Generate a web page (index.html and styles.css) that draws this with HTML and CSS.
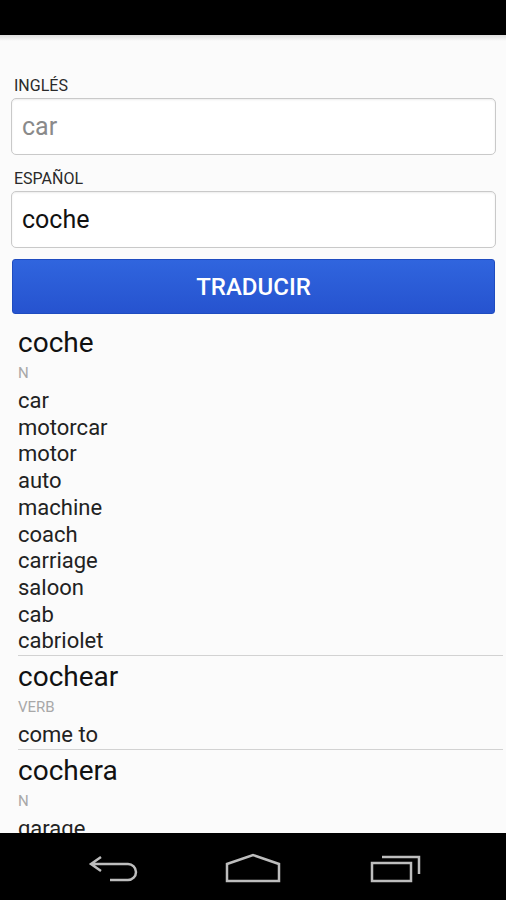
FILE: index.html
```html
<!DOCTYPE html>
<html>
<head>
  <link rel="stylesheet" href="styles.css">
</head>
<body>
  <div class="screen">
    <div class="status-bar"></div>

    <div class="content">
      <div class="form">
        <label class="field-label">INGLÉS</label>
        <input class="field-input" type="text" placeholder="car">

        <label class="field-label">ESPAÑOL</label>
        <input class="field-input" type="text" value="coche">

        <button class="translate-button">TRADUCIR</button>
      </div>

      <div class="results">
        <div class="entry">
          <div class="entry-word">coche</div>
          <div class="entry-pos">N</div>
          <div class="entry-meaning">car</div>
          <div class="entry-meaning">motorcar</div>
          <div class="entry-meaning">motor</div>
          <div class="entry-meaning">auto</div>
          <div class="entry-meaning">machine</div>
          <div class="entry-meaning">coach</div>
          <div class="entry-meaning">carriage</div>
          <div class="entry-meaning">saloon</div>
          <div class="entry-meaning">cab</div>
          <div class="entry-meaning">cabriolet</div>
        </div>
        <div class="entry">
          <div class="entry-word">cochear</div>
          <div class="entry-pos">VERB</div>
          <div class="entry-meaning">come to</div>
        </div>
        <div class="entry">
          <div class="entry-word">cochera</div>
          <div class="entry-pos">N</div>
          <div class="entry-meaning">garage</div>
        </div>
      </div>
    </div>

    <div class="nav-bar">
      <svg class="nav-icons" width="506" height="67" viewBox="0 0 506 67">
        <!-- back -->
        <path d="M101 24 L91 31 L101 38 M91 31 H128 A8 8 0 0 1 128 47 H110" />
        <!-- home -->
        <path d="M227 48 V31 L253 22 L279 31 V48 Z" />
        <!-- recents -->
        <rect x="372" y="30" width="39" height="18" />
        <path d="M382 24 H419 V41" />
      </svg>
    </div>
  </div>
</body>
</html>
```

FILE: styles.css
```css
body {
  margin: 0;
  padding: 0;
  background-color: #000;
  font-family: Roboto, "Noto Sans", sans-serif;
}

.screen {
  width: 506px;
  height: 900px;
  display: flex;
  flex-direction: column;
  overflow: hidden;
}

.status-bar {
  height: 35px;
  flex-shrink: 0;
  background: #000;
}

.content {
  flex: 1;
  overflow: hidden;
  background: #fbfbfb;
  position: relative;
}

.content::before {
  content: '';
  position: absolute;
  top: 0;
  left: 0;
  right: 0;
  height: 6px;
  background: linear-gradient(to bottom, rgba(0, 0, 0, 0.12), transparent);
}

.form {
  display: flex;
  flex-direction: column;
  padding: 41px 10px 0 11px;
}

.field-label {
  font-size: 16px;
  line-height: 20px;
  color: #2a2a2a;
  padding-left: 3px;
  margin-bottom: 2px;
}

.field-input {
  box-sizing: border-box;
  height: 57px;
  margin: 0 0 14px 0;
  padding: 0 10px;
  border: 1px solid #c9c9c9;
  border-radius: 5px;
  background: #fff;
  box-shadow: inset 0 1px 2px rgba(0, 0, 0, 0.08);
  font-family: Roboto, "Noto Sans", sans-serif;
  font-size: 25px;
  color: #111;
  outline: none;
}

.field-input::placeholder {
  color: #8a8a8a;
}

.translate-button {
  box-sizing: border-box;
  height: 55px;
  margin: -3px 1px 0 1px;
  border: 1px solid #1f4cc0;
  border-radius: 3px;
  background: linear-gradient(to bottom, #3065de, #2653cf);
  color: #fff;
  font-family: Roboto, "Noto Sans", sans-serif;
  font-size: 24px;
  font-weight: 500;
}

.results {
  padding-top: 8px;
}

.entry {
  margin: 0 3px 0 18px;
  padding-top: 4px;
  border-bottom: 1px solid #d2d2d2;
}

.entry-word {
  font-size: 28px;
  line-height: 34px;
  color: #111;
}

.entry-pos {
  font-size: 15px;
  line-height: 26px;
  margin-bottom: 2px;
  color: #a8a8a8;
}

.entry-meaning {
  font-size: 22px;
  line-height: 26.7px;
  color: #222;
}

.nav-bar {
  height: 67px;
  flex-shrink: 0;
  background: #000;
}

.nav-icons {
  display: block;
  fill: none;
  stroke: #bdbdbd;
  stroke-width: 2.5;
}
```
